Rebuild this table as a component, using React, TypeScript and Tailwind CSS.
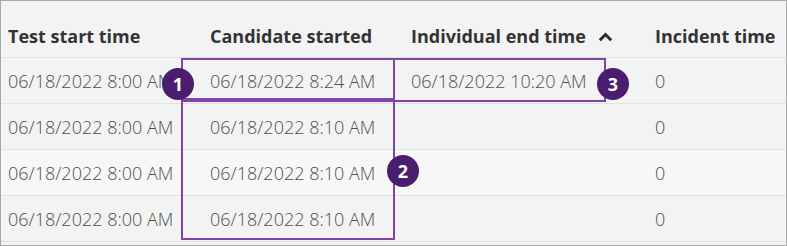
import React from "react";

const rows = [
  ["06/18/2022 8:00 AM", "06/18/2022 8:24 AM", "06/18/2022 10:20 AM", "0"],
  ["06/18/2022 8:00 AM", "06/18/2022 8:10 AM", "", "0"],
  ["06/18/2022 8:00 AM", "06/18/2022 8:10 AM", "", "0"],
  ["06/18/2022 8:00 AM", "06/18/2022 8:10 AM", "", "0"],
];

function Badge({ n, className }: { n: string; className: string }) {
  return (
    <div
      className={`absolute w-[32px] h-[32px] rounded-full bg-[#4b1d6e] text-white flex items-center justify-center text-[18px] font-bold ${className}`}
    >
      {n}
    </div>
  );
}

export default function App() {
  return (
    <div
      className="relative w-[787px] h-[246px] bg-[#f3f3f3] border border-[#a8a8a8] overflow-hidden"
      style={{ fontFamily: '"Open Sans", sans-serif' }}
    >
      <div className="grid grid-cols-[201px_201px_244px_1fr] h-[57px] items-end pb-[7px] border-b border-[#e2e2e2] text-[18px] font-bold text-[#333] whitespace-nowrap">
        <div className="pl-[7px]">Test start time</div>
        <div className="pl-[8px]">Candidate started</div>
        <div className="pl-[8px] flex items-center gap-[12px]">
          Individual end time
          <svg width="15" height="10" viewBox="0 0 15 10" className="mt-[1px]">
            <path d="M1.8 8.2 L7.5 2.5 L13.2 8.2" fill="none" stroke="#2a2a2a" strokeWidth="3" />
          </svg>
        </div>
        <div className="pl-[8px]">Incident time</div>
      </div>
      {rows.map((r, i) => (
        <div
          key={i}
          className={`grid grid-cols-[201px_201px_244px_1fr] h-[46px] items-center pt-[2px] border-b border-[#e2e2e2] text-[18px] font-light text-[#4e4e4e] ${
            i === 2 ? "bg-[#f7f7f7]" : ""
          }`}
        >
          <div className="pl-[7px] whitespace-nowrap">{r[0]}</div>
          <div className="pl-[8px] whitespace-nowrap">{r[1]}</div>
          <div className="pl-[8px] whitespace-nowrap">{r[2]}</div>
          <div className="pl-[8px] whitespace-nowrap">{r[3]}</div>
        </div>
      ))}

      <div className="absolute left-[180px] top-[57px] w-[214px] h-[44px] border-2 border-[#7e44aa]" />
      <div className="absolute left-[392px] top-[57px] w-[213px] h-[44px] border-2 border-[#7e44aa]" />
      <div className="absolute left-[180px] top-[97px] w-[214px] h-[142px] border-2 border-[#7e44aa]" />

      <Badge n="1" className="left-[161px] top-[67px]" />
      <Badge n="3" className="left-[596px] top-[67px]" />
      <Badge n="2" className="left-[386px] top-[154px]" />
    </div>
  );
}
